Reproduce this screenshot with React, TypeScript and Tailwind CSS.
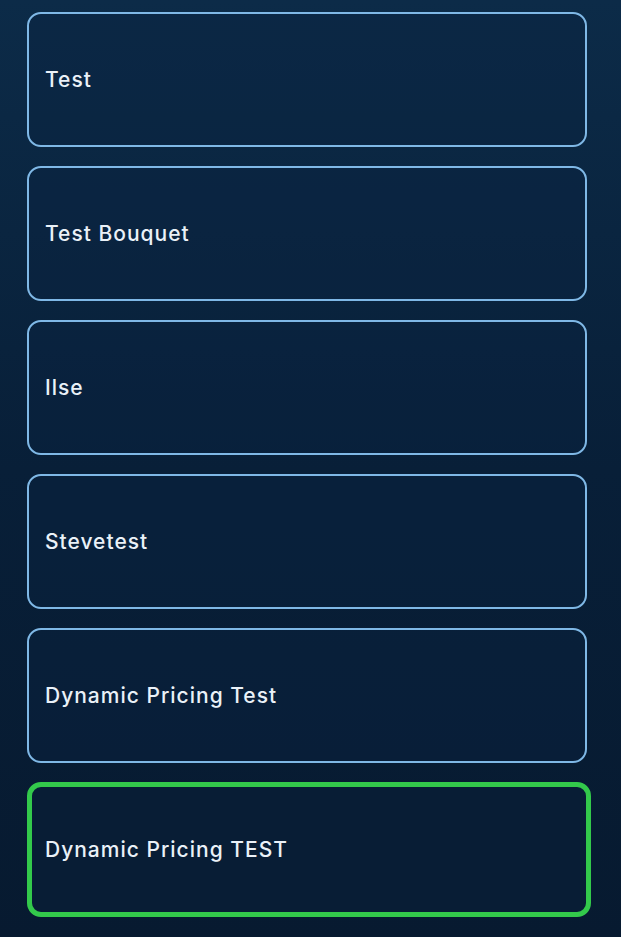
import React from 'react';

const items = ['Test', 'Test Bouquet', 'Ilse', 'Stevetest', 'Dynamic Pricing Test', 'Dynamic Pricing TEST'];

export default function App() {
  const selected = 5;
  return (
    <div
      className="min-h-[937px] w-full bg-gradient-to-b from-[#0c2b48] via-[#081f38] to-[#071a30] pl-[27px] pr-[34px] pt-[12px] pb-[20px]"
      style={{ fontFamily: 'Inter, "Noto Sans", sans-serif' }}
    >
      <div className="flex flex-col gap-[19px]">
        {items.map((label, idx) => (
          <button
            key={idx}
            className={`flex h-[135px] items-center rounded-[14px] text-left text-[21px] font-medium tracking-[1px] text-[#eaf1f8] ${
              idx === selected
                ? 'border-[5px] border-[#33c94b] -mr-[4px] pl-[13px] bg-[#081d35]'
                : 'border-2 border-[#7fb8e6] pl-[16px] bg-[#0a2440]/40'
            }`}
          >
            {label}
          </button>
        ))}
      </div>
    </div>
  );
}
